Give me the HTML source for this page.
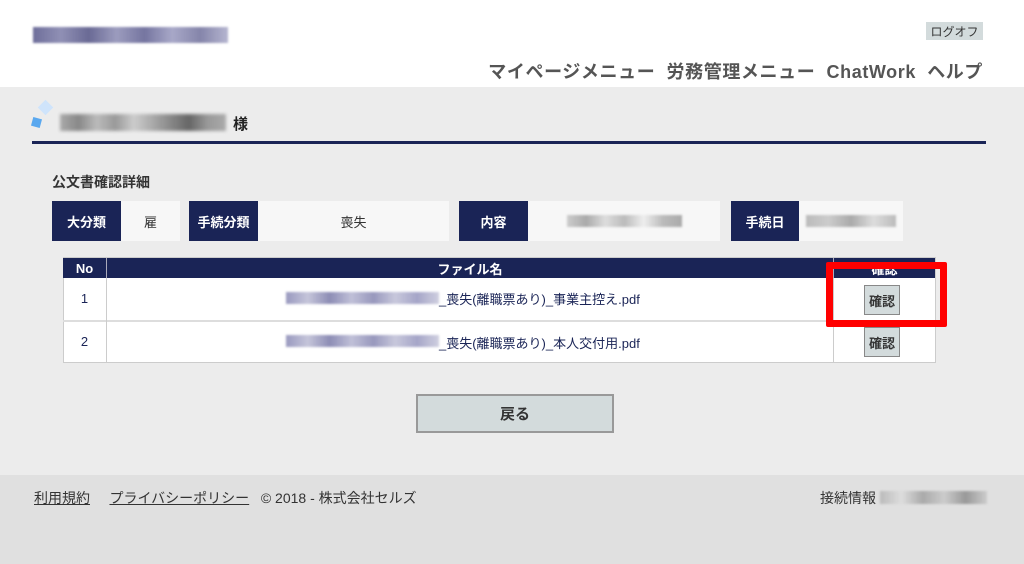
<!DOCTYPE html>
<html><head><meta charset="utf-8"><style>
*{margin:0;padding:0;box-sizing:border-box}
body{width:1024px;height:564px;position:relative;background:#ececec;font-family:"Liberation Sans","Noto Sans CJK JP",sans-serif;overflow:hidden;color:#222}
.a{position:absolute}
.navy{background:#1a2456;color:#fff;font-weight:bold;font-size:13px;display:flex;align-items:center;justify-content:center}
.wc{background:#f7f7f7;font-size:13px;display:flex;align-items:center;justify-content:center;color:#333}
.blur{background:linear-gradient(90deg,#9a9abf,#c5c5da,#8d8db5,#c0c0d8,#9898bd,#c8c8dc,#a5a5c8,#d0d0e0);filter:blur(1px)}
.btn{background:#d3dbdc;border:1px solid #888;font-weight:bold;font-size:13px;display:flex;align-items:center;justify-content:center;color:#333}
</style></head><body>
<div class="a" style="left:0;top:0;width:1024px;height:87px;background:#fff"></div>
<div class="a blur" style="left:33px;top:27px;width:195px;height:16px;background:linear-gradient(90deg,#6e6e9a,#9090b5,#6a6a95,#9c9cbe,#7575a0,#a8a8c8,#8585aa,#b5b5d0)"></div>
<div class="a" style="left:926px;top:22px;width:57px;height:18px;background:#d3dbdc;font-size:12px;display:flex;align-items:center;justify-content:center;color:#333">ログオフ</div>
<div class="a" style="right:41px;top:58px;font-size:18px;font-weight:bold;color:#555;white-space:nowrap;letter-spacing:0.6px">マイページメニュー&nbsp; 労務管理メニュー&nbsp; ChatWork&nbsp; ヘルプ</div>
<div class="a" style="left:40px;top:102px;width:11px;height:11px;background:#cfe4fb;transform:rotate(45deg)"></div>
<div class="a" style="left:32px;top:118px;width:9px;height:9px;background:#5aa8ef;transform:rotate(15deg)"></div>
<div class="a" style="left:60px;top:114px;width:166px;height:17px;background:linear-gradient(90deg,#aaa,#888,#bbb,#999,#ccc,#aaa,#888,#666,#999,#aaa);filter:blur(1.5px)"></div>
<div class="a" style="left:233px;top:113px;font-size:15px;font-weight:bold">様</div>
<div class="a" style="left:32px;top:141px;width:954px;height:3px;background:#1a2456"></div>
<div class="a" style="left:52px;top:172px;font-size:14px;font-weight:bold;color:#333">公文書確認詳細</div>
<div class="a navy" style="left:52px;top:201px;width:69px;height:40px">大分類</div>
<div class="a wc" style="left:121px;top:201px;width:59px;height:40px">雇</div>
<div class="a navy" style="left:189px;top:201px;width:69px;height:40px">手続分類</div>
<div class="a wc" style="left:258px;top:201px;width:191px;height:40px">喪失</div>
<div class="a navy" style="left:459px;top:201px;width:69px;height:40px">内容</div>
<div class="a wc" style="left:528px;top:201px;width:192px;height:40px"><div style="width:115px;height:12px;background:linear-gradient(90deg,#ccc,#aaa,#ddd,#bbb,#eee,#bbb,#aaa);filter:blur(1px)"></div></div>
<div class="a navy" style="left:731px;top:201px;width:68px;height:40px">手続日</div>
<div class="a wc" style="left:799px;top:201px;width:104px;height:40px"><div style="width:90px;height:12px;background:linear-gradient(90deg,#bbb,#ccc,#aaa,#ddd,#bbb);filter:blur(1px)"></div></div>
<div class="a" style="left:63px;top:257px;width:873px;height:106px;background:#fff;border:1px solid #ccc"></div>
<div class="a navy" style="left:63px;top:258px;width:43px;height:20px">No</div>
<div class="a navy" style="left:106px;top:258px;width:727px;height:20px;border-left:1px solid #aab">ファイル名</div>
<div class="a navy" style="left:833px;top:258px;width:102px;height:20px;border-left:1px solid #aab">確認</div>
<div class="a" style="left:63px;top:320px;width:873px;height:2px;background:#ddd"></div>
<div class="a" style="left:106px;top:278px;width:1px;height:85px;background:#ccc"></div>
<div class="a" style="left:833px;top:278px;width:1px;height:85px;background:#ccc"></div>
<div class="a" style="left:63px;top:291px;width:43px;text-align:center;font-size:13px;color:#1a2456">1</div>
<div class="a" style="left:63px;top:334px;width:43px;text-align:center;font-size:13px;color:#1a2456">2</div>
<div class="a blur" style="left:286px;top:292px;width:153px;height:12px"></div>
<div class="a" style="left:439px;top:289px;font-size:13px;color:#1a2456">_喪失(離職票あり)_事業主控え.pdf</div>
<div class="a blur" style="left:286px;top:335px;width:153px;height:12px"></div>
<div class="a" style="left:439px;top:333px;font-size:13px;color:#1a2456">_喪失(離職票あり)_本人交付用.pdf</div>
<div class="a btn" style="left:864px;top:285px;width:36px;height:30px">確認</div>
<div class="a btn" style="left:864px;top:327px;width:36px;height:30px">確認</div>
<div class="a" style="left:826px;top:262px;width:121px;height:65px;border:7px solid #f00;border-radius:2px"></div>
<div class="a btn" style="left:416px;top:394px;width:198px;height:39px;font-size:15px;border:2px solid #999">戻る</div>
<div class="a" style="left:0;top:475px;width:1024px;height:89px;background:#e0e0e0"></div>
<div class="a" style="left:34px;top:488px;font-size:14px;color:#333;white-space:nowrap"><span style="text-decoration:underline">利用規約</span>&nbsp;&nbsp;&nbsp;&nbsp; <span style="text-decoration:underline">プライバシーポリシー</span>&nbsp;&nbsp; © 2018 - 株式会社セルズ</div>
<div class="a" style="left:820px;top:488px;font-size:14px;color:#333">接続情報</div>
<div class="a" style="left:880px;top:491px;width:107px;height:13px;background:linear-gradient(90deg,#bbb,#ddd,#aaa,#ccc,#999,#ccc);filter:blur(1px)"></div>
</body></html>
